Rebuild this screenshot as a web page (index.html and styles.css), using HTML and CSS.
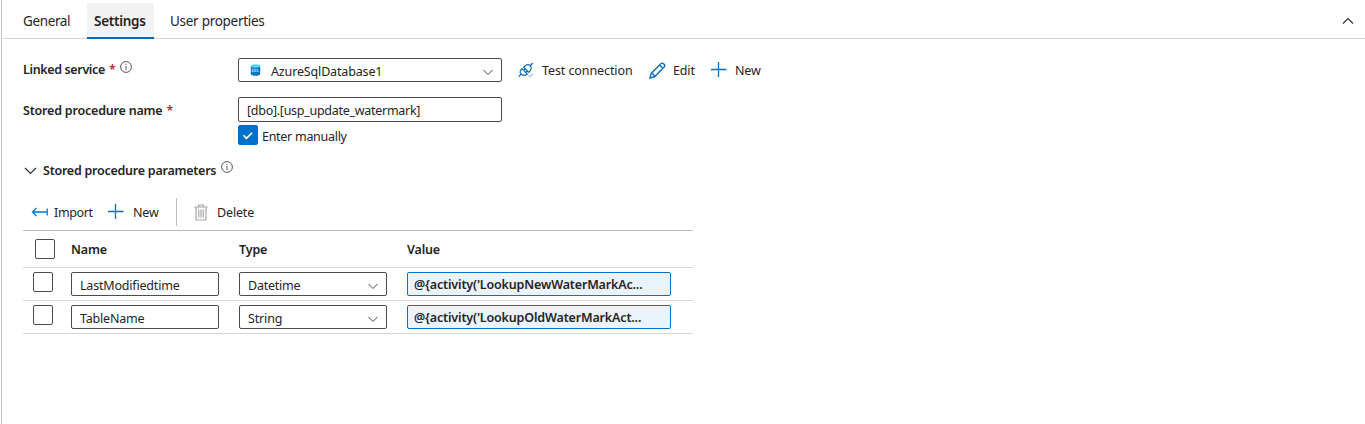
FILE: index.html
```html
<!DOCTYPE html>
<html lang="en">
<head>
<meta charset="utf-8">
<title>Stored procedure settings</title>
<link rel="stylesheet" href="styles.css">
</head>
<body>
<main class="panel">
  <nav class="tabs">
    <a class="tab tab-general"><span>General</span></a>
    <a class="tab tab-active"><span>Settings</span></a>
    <a class="tab tab-user"><span>User properties</span></a>
    <svg class="collapse" width="12" height="8" viewBox="0 0 12 8"><path d="M1 6.500 6 1.500l5 5" fill="none" stroke="#323130" stroke-width="1.200"/></svg>
  </nav>

  <section class="form">
    <div class="field field-service">
      <div class="label"><span class="t-linked">Linked service</span><span class="required">*</span>
        <svg class="info" width="12" height="12" viewBox="0 0 12 12"><circle cx="6" cy="6" r="5.400" fill="none" stroke="#444" stroke-width=".9"/><path d="M6 5v4M6 3v1" stroke="#555"/></svg>
      </div>
      <div class="box select service">
        <svg width="11" height="12" viewBox="0 0 11 12"><path d="M.8 2v8c0 2.400 9.400 2.400 9.400 0V2z" fill="#0873c8"/><ellipse cx="5.500" cy="2" rx="4.700" ry="1.800" fill="#50d4ee"/><path d="M3.400 5.200H2v1.200h1.200v1.200H1.600M4.500 5.200h1.600v2.400H4.500zM7.500 5v2.600H9" fill="none" stroke="#d8edff" stroke-width=".65"/></svg>
        <span class="t-azure">AzureSqlDatabase1</span>
        <svg class="chev" width="12" height="7" viewBox="0 0 12 7"><path d="M1.500 1 6 5.500 10.500 1" fill="none" stroke="#444"/></svg>
      </div>
      <div class="actions">
        <svg width="16" height="16" viewBox="0 0 16 16" fill="none" stroke="#0b6cbd" stroke-width="1.200"><path d="M.7 14.500 3.200 12M12 4l2.800-3M3.200 12c-2-2-.8-3.800.8-5.300l5.300 5.300c-2 1.800-4.200 2-6.100 0zM5.800 5.200C7.600 3 10 1.600 12.200 3.800c2.100 2 .8 4.500-1.300 6.500zM5.600 8.400l2-2M7.800 10.500l2-2"/><path d="m10.500 13.300 1.400 1.400 3.200-3.200" stroke="#4596d5" stroke-width=".9"/></svg>
        <span class="t-test">Test connection</span>
        <svg class="pencil" width="17" height="17" viewBox="0 0 17 17" fill="none" stroke="#0b6cbd" stroke-width="1.400"><path d="m1 16 1.200-4.600L11.800 1.800c1.900-1.900 5.100 1.300 3.300 3.300L5.600 14.800zM10.500 3.100l3.400 3.400M2.200 11.400c1.800.2 3.100 1.500 3.400 3.400"/></svg>
        <span class="t-edit">Edit</span>
        <svg class="plus" width="16" height="16" viewBox="0 0 16 16"><path d="M7.500 0v15M0 7.500h15.500" stroke="#006fc4" stroke-width="1.300"/></svg>
        <span class="t-new">New</span>
      </div>
    </div>
    <div class="field field-proc">
      <div class="label"><span class="t-proc">Stored procedure name</span><span class="required">*</span></div>
      <div class="box proc"><span class="t-dbo">[dbo].[usp_update_watermark]</span></div>
    </div>
    <div class="manual">
      <span class="check checked"><svg width="12" height="9" viewBox="0 0 12 9"><path d="m1.500 4.300 3 3 5.500-5.500" fill="none" stroke="#fff" stroke-width="1.700"/></svg></span>
      <span class="t-manual">Enter manually</span>
    </div>
  </section>

  <section class="params">
    <h2 class="heading">
      <svg width="13" height="8" viewBox="0 0 13 8"><path d="m1 1 5.500 5.500L12 1" fill="none" stroke="#323130" stroke-width="1.200"/></svg>
      <span class="t-params">Stored procedure parameters</span>
      <svg class="info" width="12" height="12" viewBox="0 0 12 12"><circle cx="6" cy="6" r="5.400" fill="none" stroke="#444" stroke-width=".9"/><path d="M6 5v4M6 3v1" stroke="#555"/></svg>
    </h2>
    <div class="toolbar">
      <svg class="import" width="17" height="10" viewBox="0 0 17 10"><path d="M1.500 5H16M5.500 1l-4 4 4 4M16.200 1.500v7" fill="none" stroke="#0078d4" stroke-width="1.300"/></svg>
      <span class="t-import">Import</span>
      <svg class="plus" width="16" height="16" viewBox="0 0 16 16"><path d="M7.500 0v15M0 7.500h15.500" stroke="#006fc4" stroke-width="1.300"/></svg>
      <span class="t-new">New</span>
      <span class="divider"></span>
      <svg class="trash" width="14" height="17" viewBox="0 0 14 17" fill="none" stroke="#a5a5a5" stroke-width="1.200"><path d="M.5 3h13M4.500 3V1h5v2M2 3v13h10V3"/><path d="M4.700 5.500v8M7 5.500v8M9.300 5.500v8"/></svg>
      <span class="t-delete">Delete</span>
    </div>
    <div class="table">
      <div class="row head">
        <span class="check"></span>
        <span class="cell">Name</span>
        <span class="cell">Type</span>
        <span class="cell">Value</span>
      </div>
      <div class="row">
        <span class="check"></span>
        <div class="box"><span class="t-last">LastModifiedtime</span></div>
        <div class="box select"><span class="t-date">Datetime</span><svg class="chev" width="12" height="7" viewBox="0 0 12 7"><path d="M1.500 1 6 5.500 10.500 1" fill="none" stroke="#444"/></svg></div>
        <div class="box expr"><span>@{activity('LookupNewWaterMarkAc...</span></div>
      </div>
      <div class="row">
        <span class="check"></span>
        <div class="box"><span class="t-table">TableName</span></div>
        <div class="box select"><span class="t-string">String</span><svg class="chev" width="12" height="7" viewBox="0 0 12 7"><path d="M1.500 1 6 5.500 10.500 1" fill="none" stroke="#444"/></svg></div>
        <div class="box expr"><span>@{activity('LookupOldWaterMarkAct...</span></div>
      </div>
    </div>
  </section>
</main>
</body>
</html>
```

FILE: styles.css
```css
* { box-sizing: border-box; }
body { margin: 0; background: #fff; color: #242424; font: 12.5px/18px "Noto Sans", "Open Sans", sans-serif; }
svg { display: block; flex: none; }
span { white-space: nowrap; }
.panel { height: 424px; margin-left: 1px; border-left: 1px solid #c4c4c4; }

.tabs { display: flex; height: 39px; margin-left: 1px; padding: 3px 11px 0 20px; border-bottom: 1px solid #d6d6d6; font-size: 13.5px; }
.tab { display: flex; height: 36px; align-items: center; letter-spacing: -.28px; }
.tab-general { width: 64px; letter-spacing: -.38px; }
.tab-active { width: 67px; padding-left: 7px; background: #f2f2f2; border-bottom: 2px solid #006cbe; font-weight: 600; padding-top: 2px; }
.tab-user { margin-left: 16px; }
.collapse { margin: 14px 0 0 auto; }

.form { padding: 19px 0 0 21px; }
.field { display: flex; }
.label { display: flex; width: 215px; font-weight: 600; }
.required { margin-left: 4px; color: #c4262e; }
.info { margin-left: 5px; }
.label .info { margin-left: 4px; }
.field-service { height: 39px; }
.field-service .label { padding-top: 3px; }
.field-proc { height: 25px; }
.field-proc .label { padding-top: 5px; }
.t-linked { letter-spacing: -.36px; }
.t-proc { letter-spacing: -.2px; }
.box { display: flex; height: 24px; align-items: center; padding: 3px 8px 0; border: 1px solid #4b4b4b; border-radius: 2px; background: #fff; }
.service, .proc { width: 264px; }
.service { padding-left: 11px; gap: 10px; }
.service svg:first-child { margin-top: -4px; }
.proc { height: 25px; }
.chev { margin: 1px -1px 0 auto; }
.t-azure { letter-spacing: -.15px; }
.t-dbo { letter-spacing: -.28px; }
.actions { display: flex; height: 24px; align-items: center; margin-left: 16px; }
.actions .t-test { width: 91px; margin: 2px 16px 0 8px; letter-spacing: -.09px; }
.actions .t-edit { width: 22px; margin: 2px 16px 0 7px; letter-spacing: -.15px; }
.actions .t-new { margin: 2px 0 0 8px; }
.t-new { letter-spacing: -.15px; }
.manual { display: flex; gap: 4px; margin: 3px 0 0 215px; height: 20px; }
.t-manual { padding-top: 3px; letter-spacing: -.28px; }
.check { display: flex; width: 20px; height: 20px; align-items: center; justify-content: center; border: 1px solid #4b4b4b; border-radius: 2px; }
.checked { background: #0072c9; border-color: #0072c9; }

.params { width: 691px; padding: 16px 0 0 21px; }
.heading { display: flex; height: 18px; margin: 0 0 19px 1px; font: inherit; font-weight: 600; }
.heading svg:first-child { margin: 6px 6px 0 0; }
.t-params { padding-top: 1px; letter-spacing: -.25px; }
.toolbar { display: flex; height: 28px; align-items: center; padding-left: 8px; }
.toolbar > span { margin-top: 1px; }
.toolbar .t-import { width: 39px; margin-left: 6px; letter-spacing: -.35px; }
.toolbar .plus { margin-left: 15px; }
.toolbar .t-new { width: 26px; margin-left: 9px; }
.toolbar .divider { width: 1px; height: 28px; margin: 0 17px 0 17px; background: #bdbdbd; }
.toolbar .t-delete { margin-left: 9px; letter-spacing: -.15px; }
.table { margin-top: 4px; border-top: 1px solid #b8b8b8; }
.row { display: grid; grid-template-columns: 28px 148px 148px 264px; column-gap: 20px; height: 33px; padding-top: 4px; border-bottom: 1px solid #d6d6d6; }
.row .check { margin-left: 10px; }
.head { height: 37px; padding-top: 8px; font-weight: 600; letter-spacing: -.15px; }
.head .check { margin-left: 12px; }
.head .cell { padding-top: 2px; }
.t-last, .t-table { letter-spacing: -.19px; }
.t-date { letter-spacing: -.25px; }
.t-string { letter-spacing: -.15px; }
.expr { padding: 1px 6px 0; border-color: #0072c9; background: #ebf3fc; font-weight: 600; letter-spacing: -.16px; }
```
